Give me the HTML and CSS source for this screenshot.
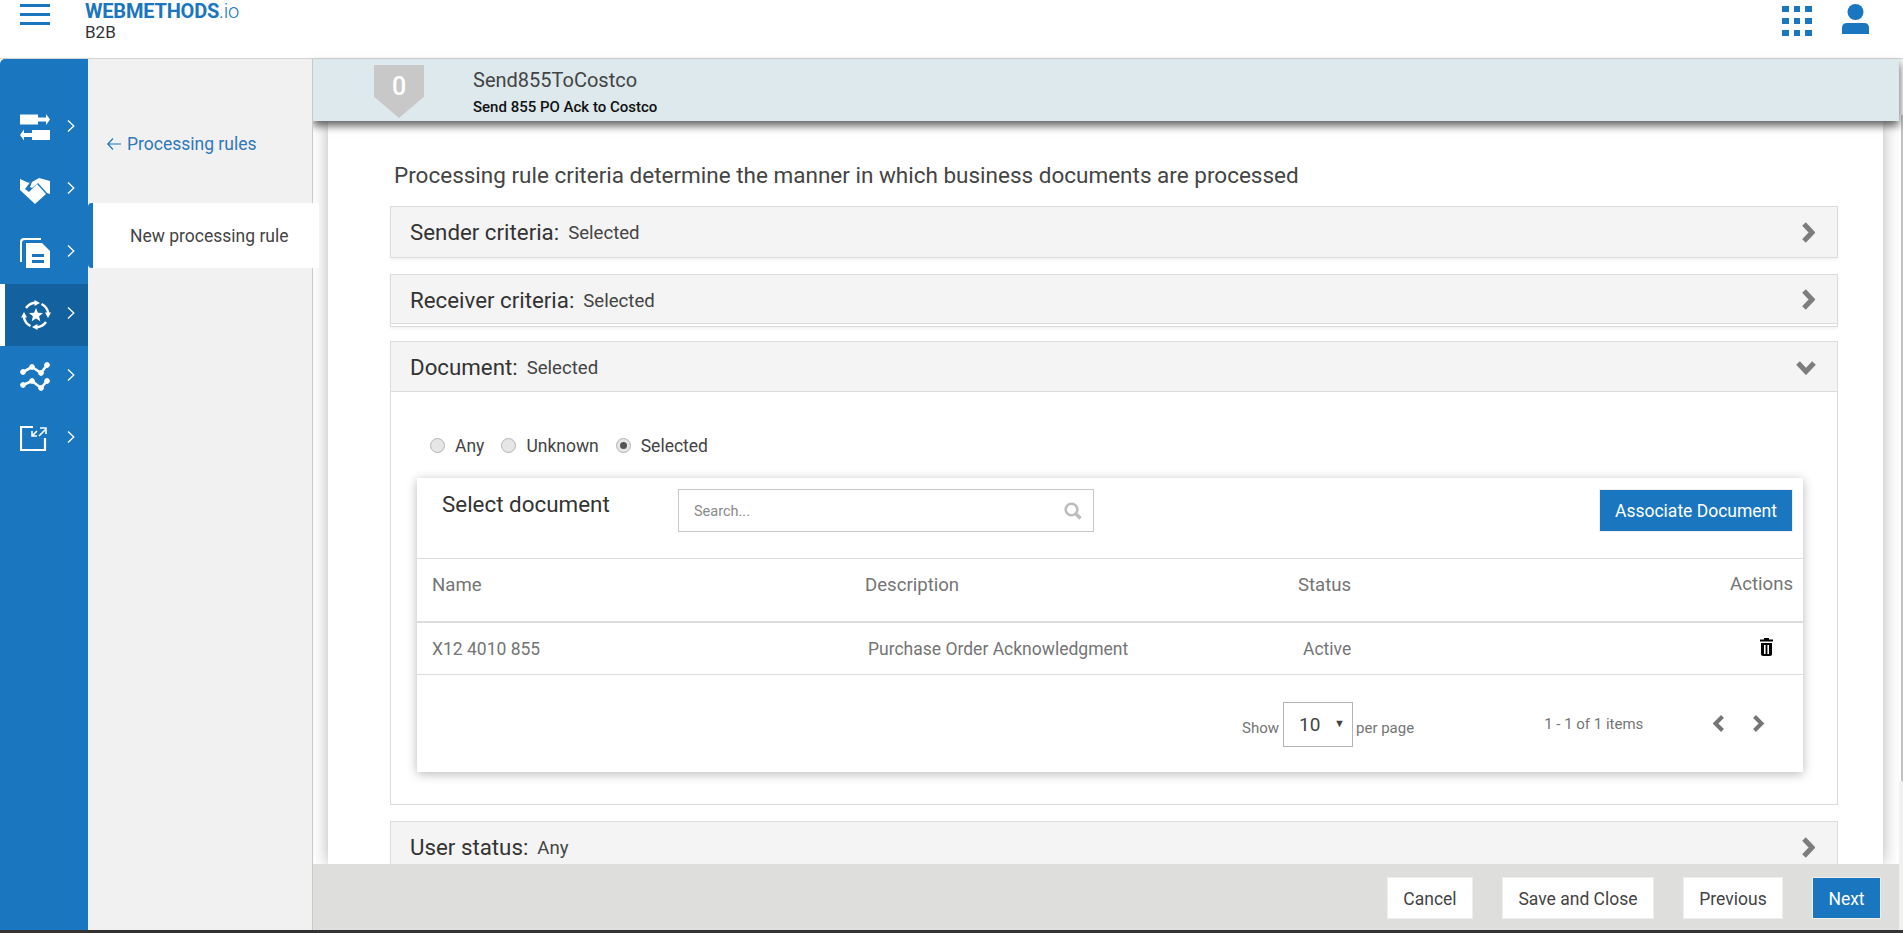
FILE: index.html
```html
<!DOCTYPE html>
<html lang="en">
<head>
  <meta charset="UTF-8" />
  <title>webMethods.io B2B</title>
  <link rel="stylesheet" href="styles.css">
</head>
<body>

<header class="topbar">
  <div class="hamburger"><span></span><span></span><span></span></div>
  <div class="brand">
    <div class="brand-name">WEBMETHODS<span class="brand-io">.io</span></div>
    <div class="brand-sub">B2B</div>
  </div>
  <div class="top-icons">
    <svg class="icon-apps" width="30" height="30" viewBox="0 0 30 30" fill="#1976bf">
      <rect x="0" y="0" width="7" height="6"/><rect x="12" y="0" width="6" height="6"/><rect x="23" y="0" width="7" height="6"/>
      <rect x="0" y="12" width="7" height="6"/><rect x="12" y="12" width="6" height="6"/><rect x="23" y="12" width="7" height="6"/>
      <rect x="0" y="24" width="7" height="6"/><rect x="12" y="24" width="6" height="6"/><rect x="23" y="24" width="7" height="6"/>
    </svg>
    <svg class="icon-user" width="27" height="30" viewBox="0 0 27 30" fill="#1976bf">
      <circle cx="13.5" cy="8" r="8"/>
      <path d="M0 30V24Q0 19 5 19H22Q27 19 27 24V30Z"/>
    </svg>
  </div>
</header>

<div class="app">
  <nav class="sidebar">
    <div class="side-item item-first">
      <svg width="30" height="27" viewBox="0 0 30 27" fill="#fff">
        <path d="M0 .5H18V3.5H26V0L30 5.5L26 11V7.5H18V10.5H0Z"/>
        <path d="M30 16H12V19H4V15.5L0 21L4 26.5V23H12V26H30Z"/>
      </svg>
      <svg class="chev" width="8" height="12" viewBox="0 0 8 12"><path d="M1 .5L6.8 6L1 11.5" fill="none" stroke="#fff" stroke-width="1.3"/></svg>
    </div>
    <div class="side-item">
      <svg width="30" height="27" viewBox="0 0 30 27" fill="#fff">
        <path d="M0 2L9 6L11 4L5 12L9 15L17 7L26 17L15 27L0 13Z"/>
        <path d="M12 5L19 1L30 4V17L27 16L18 6L12 11L10 10Z"/>
      </svg>
      <svg class="chev" width="8" height="12" viewBox="0 0 8 12"><path d="M1 .5L6.8 6L1 11.5" fill="none" stroke="#fff" stroke-width="1.3"/></svg>
    </div>
    <div class="side-item">
      <svg width="30" height="30" viewBox="0 0 30 30" fill="#fff">
        <path d="M0 24V4Q0 0 4 0H21V2H5Q2 2 2 5V24Z"/>
        <path fill-rule="evenodd" d="M6 5H22L30 13V30H6ZM12 16V19H24V16ZM12 22V25H24V22Z"/>
      </svg>
      <svg class="chev" width="8" height="12" viewBox="0 0 8 12"><path d="M1 .5L6.8 6L1 11.5" fill="none" stroke="#fff" stroke-width="1.3"/></svg>
    </div>
    <div class="side-item active">
      <svg width="30" height="30" viewBox="0 0 30 30" fill="none" stroke="#fff" stroke-width="2.4">
        <path d="M5 8A12.5 12.5 0 0 1 14 2.8"/>
        <path d="M20.5 4A12.5 12.5 0 0 1 27.2 13"/>
        <path d="M25 22A12.5 12.5 0 0 1 16 27.2"/>
        <path d="M9.5 26A12.5 12.5 0 0 1 2.8 17"/>
        <path fill="#fff" stroke="none" d="M13.5 0L19 3L13.5 6ZM24 12.5H30L27 18ZM16.5 24V30L11 27ZM0 17.5H6L3 12Z"/>
        <path fill="#fff" stroke="none" d="M15 8L16.9 12.7L22 13.1L18.1 16.3L19.3 21.3L15 18.6L10.7 21.3L11.9 16.3L8 13.1L13.1 12.7Z"/>
      </svg>
      <svg class="chev" width="8" height="12" viewBox="0 0 8 12"><path d="M1 .5L6.8 6L1 11.5" fill="none" stroke="#fff" stroke-width="1.3"/></svg>
    </div>
    <div class="side-item">
      <svg width="30" height="30" viewBox="0 0 30 30" fill="#fff" stroke="#fff">
        <path d="M3 10L12 5L21 11L27 3" fill="none" stroke-width="2.6"/>
        <path d="M3 23L12 19L21 26L27 19" fill="none" stroke-width="2.6"/>
        <circle cx="3" cy="10" r="2.4"/><circle cx="12" cy="5" r="2.4"/><circle cx="21" cy="11" r="2.4"/><circle cx="27" cy="3" r="2.4"/>
        <circle cx="3" cy="23" r="2.4"/><circle cx="12" cy="19" r="2.4"/><circle cx="21" cy="26" r="2.4"/><circle cx="27" cy="19" r="2.4"/>
      </svg>
      <svg class="chev" width="8" height="12" viewBox="0 0 8 12"><path d="M1 .5L6.8 6L1 11.5" fill="none" stroke="#fff" stroke-width="1.3"/></svg>
    </div>
    <div class="side-item item-last">
      <svg width="28" height="25" viewBox="0 0 28 25" fill="none" stroke="#fff" stroke-width="2.2">
        <path d="M13 1H1V24H25V12"/>
        <path d="M12 10L17 5M12 5V10H17" stroke-width="1.6"/>
        <path d="M19 10L26 3M20 2H26V8" stroke-width="1.6"/>
      </svg>
      <svg class="chev" width="8" height="12" viewBox="0 0 8 12"><path d="M1 .5L6.8 6L1 11.5" fill="none" stroke="#fff" stroke-width="1.3"/></svg>
    </div>
  </nav>

  <aside class="subnav">
    <a class="back-link">
      <svg width="14" height="12" viewBox="0 0 14 12" fill="none" stroke="#1976bf" stroke-width="1.2"><path d="M6 .5L.8 6L6 11.5M.8 6H14"/></svg>
      Processing rules
    </a>
    <div class="subnav-tab">New processing rule</div>
  </aside>

  <main class="workspace">
    <div class="banner">
      <div class="badge"><span>0</span></div>
      <div class="banner-text">
        <div class="banner-title">Send855ToCostco</div>
        <div class="banner-sub">Send 855 PO Ack to Costco</div>
      </div>
    </div>

    <div class="content">
      <div class="panel">
        <p class="intro">Processing rule criteria determine the manner in which business documents are processed</p>

        <section class="acc acc-sender">
          <div class="acc-head">
            <span class="acc-title">Sender criteria:</span><span class="acc-value">Selected</span>
            <svg class="acc-chev" width="14" height="21" viewBox="0 0 14 21"><path d="M3 2L11 10.5L3 19" fill="none" stroke="#7d7d7d" stroke-width="5"/></svg>
          </div>
        </section>

        <section class="acc acc-receiver">
          <div class="acc-head">
            <span class="acc-title">Receiver criteria:</span><span class="acc-value">Selected</span>
            <svg class="acc-chev" width="14" height="21" viewBox="0 0 14 21"><path d="M3 2L11 10.5L3 19" fill="none" stroke="#7d7d7d" stroke-width="5"/></svg>
          </div>
        </section>

        <section class="acc acc-document">
          <div class="acc-head">
            <span class="acc-title">Document:</span><span class="acc-value">Selected</span>
            <svg class="acc-chev" width="20" height="15" viewBox="0 0 20 15"><path d="M2 3L10 11.5L18 3" fill="none" stroke="#7d7d7d" stroke-width="5"/></svg>
          </div>
          <div class="acc-body">
            <div class="radios">
              <label class="radio"><i class="dot"></i>Any</label>
              <label class="radio"><i class="dot"></i>Unknown</label>
              <label class="radio"><i class="dot checked"></i>Selected</label>
            </div>

            <div class="card">
              <div class="card-head">
                <h3 class="card-title">Select document</h3>
                <div class="search">
                  <span class="search-text">Search...</span>
                  <svg width="18" height="18" viewBox="0 0 18 18" fill="none" stroke="#bdbdbd"><circle cx="7.5" cy="7.5" r="5.8" stroke-width="2.6"/><path d="M11.5 11.5L16.5 16.5" stroke-width="3.4"/></svg>
                </div>
                <button class="btn btn-primary btn-assoc">Associate Document</button>
              </div>

              <div class="row row-head">
                <div class="cell c-name">Name</div>
                <div class="cell c-desc">Description</div>
                <div class="cell c-status">Status</div>
                <div class="cell c-actions">Actions</div>
              </div>
              <div class="row row-data">
                <div class="cell c-name">X12 4010 855</div>
                <div class="cell c-desc">Purchase Order Acknowledgment</div>
                <div class="cell c-status">Active</div>
                <div class="cell c-actions">
                  <svg width="13" height="18" viewBox="0 0 13 18" fill="#000"><path d="M4 0H9V1.5H13V3.5H0V1.5H4Z"/><path fill-rule="evenodd" d="M1 5H12V16Q12 18 10 18H3Q1 18 1 16ZM4 7V16H5.6V7ZM7.4 7V16H9V7Z"/></svg>
                </div>
              </div>

              <div class="pager">
                <span class="pager-label">Show</span>
                <div class="page-size"><span>10</span><i class="caret">▼</i></div>
                <span class="pager-label">per page</span>
                <span class="pager-count">1 - 1 of 1 items</span>
                <svg class="pager-prev" width="13" height="17" viewBox="0 0 13 17"><path d="M10.5 1.5L3.5 8.5L10.5 15.5" fill="none" stroke="#757575" stroke-width="4"/></svg>
                <svg class="pager-next" width="13" height="17" viewBox="0 0 13 17"><path d="M2.5 1.5L9.5 8.5L2.5 15.5" fill="none" stroke="#757575" stroke-width="4"/></svg>
              </div>
            </div>
          </div>
        </section>

        <section class="acc acc-user">
          <div class="acc-head">
            <span class="acc-title">User status:</span><span class="acc-value">Any</span>
            <svg class="acc-chev" width="14" height="21" viewBox="0 0 14 21"><path d="M3 2L11 10.5L3 19" fill="none" stroke="#7d7d7d" stroke-width="5"/></svg>
          </div>
        </section>
      </div>
    </div>

    <footer class="actions">
      <button class="btn btn-cancel">Cancel</button>
      <button class="btn btn-save">Save and Close</button>
      <button class="btn btn-prev">Previous</button>
      <button class="btn btn-primary btn-next">Next</button>
    </footer>
  </main>

  <div class="scrollstrip"><div class="scrollthumb"></div></div>
</div>

<div class="bottom-line"></div>

</body>
</html>
```

FILE: styles.css
```css
* {
  box-sizing: border-box;
}
html, body {
  margin: 0;
  height: 933px;
  overflow: hidden;
}
body {
  font-family: Roboto, "Liberation Sans", sans-serif;
  background: #fff;
  color: #444;
}

/* top bar */
.topbar {
  height: 59px;
  display: flex;
  border-bottom: 1px solid #d4d4d4;
  position: relative;
}
.hamburger {
  width: 30px;
  margin: 4px 0 0 20px;
  display: flex;
  flex-direction: column;
  gap: 6px;
}
.hamburger span {
  display: block;
  height: 3px;
  background: #1976bf;
}
.brand {
  margin: 0 0 0 35px;
}
.brand-name {
  font-size: 20px;
  font-weight: 700;
  line-height: 22px;
  letter-spacing: -0.2px;
  color: #1976bf;
}
.brand-io {
  font-weight: 300;
}
.brand-sub {
  font-size: 17px;
  line-height: 21px;
  color: #333;
}
.top-icons {
  margin-left: auto;
  padding: 4px 34px 0 0;
  display: flex;
  gap: 30px;
  align-items: flex-start;
}
.icon-apps {
  margin-top: 2px;
}

/* layout */
.app {
  height: 871px;
  display: flex;
}
.sidebar {
  width: 88px;
  flex: none;
  background: #1976bf;
  border-top-left-radius: 5px;
  padding-top: 38px;
  position: relative;
  z-index: 2;
}
.side-item {
  height: 62.3px;
  padding-left: 20px;
  display: flex;
  align-items: center;
  position: relative;
}
.side-item .chev {
  position: absolute;
  left: 67px;
  top: 23px;
}
.item-first > svg:first-child {
  margin-top: -2px;
}
.item-last > svg:first-child {
  margin-top: -2px;
}
.side-item.active {
  background: #14619f;
  border-left: 5px solid #fff;
  padding-left: 16px;
}
.side-item.active .chev {
  left: 62px;
}
.subnav {
  width: 225px;
  flex: none;
  background: #f1f1f1;
  border-right: 1px solid #c9c9c9;
  position: relative;
  z-index: 2;
}
.back-link {
  display: flex;
  align-items: center;
  gap: 6px;
  margin: 0 0 0 19px;
  height: 144px;
  padding-top: 25px;
  font-size: 17.5px;
  color: #2f78b9;
}
.subnav-tab {
  height: 65px;
  width: 231px;
  padding-left: 37px;
  display: flex;
  align-items: center;
  background: #fff;
  font-size: 17.5px;
  color: #444;
  border-left: 5px solid #1976bf;
  border-radius: 4px 0 0 4px;
}

/* main column */
.workspace {
  flex: 1;
  min-width: 0;
  display: flex;
  flex-direction: column;
}
.banner {
  height: 62px;
  flex: none;
  background: #dde9ed;
  display: flex;
  padding-left: 61px;
  box-shadow: 0 5px 8px rgba(0, 0, 0, 0.6);
  position: relative;
  z-index: 1;
}
.badge {
  width: 50px;
  height: 53px;
  margin-top: 6px;
  background: #c8c8c8;
  clip-path: polygon(0 0, 100% 0, 100% 60%, 50% 100%, 0 60%);
  color: #fff;
  font-size: 25px;
  font-weight: 500;
  text-align: center;
  line-height: 44px;
}
.banner-text {
  margin-left: 49px;
}
.banner-title {
  margin-top: 8px;
  font-size: 20px;
  line-height: 26px;
  color: #444;
}
.banner-sub {
  margin-top: 6px;
  font-size: 15px;
  line-height: 17px;
  font-weight: 500;
  color: #111;
}
.content {
  flex: 1;
  min-height: 0;
  overflow: hidden;
  padding: 0 16px 0 15px;
}
.panel {
  background: #fff;
  height: 100%;
  padding: 1px 45px 0 62px;
  box-shadow: 0 0 16px rgba(0, 0, 0, 0.3);
}
.intro {
  margin: 39px 0 0 4px;
  font-size: 22.5px;
  line-height: 28px;
  color: #444;
}

/* accordions */
.acc {
  border: 1px solid #dcdcdc;
  background: #fff;
}
.acc-sender {
  margin-top: 17px;
  height: 52px;
  border-bottom-width: 2px;
  box-shadow: 0 2px 3px rgba(0, 0, 0, 0.05);
}
.acc-receiver {
  margin-top: 16px;
  height: 53px;
  box-shadow: 0 2px 3px rgba(0, 0, 0, 0.05);
}
.acc-document {
  margin-top: 14px;
  height: 464px;
}
.acc-user {
  margin-top: 16px;
  height: 52px;
}
.acc-head {
  height: 50px;
  padding: 0 22px 0 19px;
  display: flex;
  align-items: center;
  background: #f4f4f4;
}
.acc-receiver .acc-head {
  height: 49px;
  padding-top: 1px;
  border-bottom: 1px solid #dcdcdc;
}
.acc-document .acc-head {
  height: 50px;
  padding-top: 1px;
  border-bottom: 1px solid #dcdcdc;
}
.acc-title {
  font-size: 22.3px;
  color: #333;
}
.acc-value {
  margin: 2px 0 0 9px;
  font-size: 18.6px;
  color: #444;
}
.acc-chev {
  margin-left: auto;
}
.acc-document .acc-chev {
  margin-right: -1px;
}

.acc-body {
  padding: 0 34px 0 26px;
}
.radios {
  height: 86px;
  display: flex;
  align-items: center;
  padding: 21px 0 0 13px;
  gap: 17px;
}
.radio {
  display: flex;
  align-items: center;
  gap: 10px;
  font-size: 17.5px;
  color: #444;
}
.dot {
  width: 15px;
  height: 15px;
  border-radius: 50%;
  border: 1px solid #b4b4b4;
  background: #e6e6e6;
  position: relative;
}
.dot.checked::after {
  content: "";
  position: absolute;
  left: 3px;
  top: 3px;
  width: 7px;
  height: 7px;
  border-radius: 50%;
  background: #555;
}

/* document card */
.card {
  height: 294px;
  background: #fff;
  box-shadow: 0 2px 10px rgba(0, 0, 0, 0.28);
}
.card-head {
  height: 81px;
  display: flex;
  align-items: flex-start;
  padding: 11px 10px 0 25px;
  border-bottom: 1px solid #dcdcdc;
}
.card-title {
  margin: 0;
  width: 236px;
  flex: none;
  font-size: 22.4px;
  font-weight: 400;
  line-height: 30px;
  color: #333;
}
.search {
  width: 416px;
  height: 43px;
  border: 1px solid #c8c8c8;
  display: flex;
  align-items: center;
  justify-content: space-between;
  padding: 1px 11px 0 15px;
}
.search-text {
  font-size: 14.5px;
  color: #8a8a8a;
}
.btn {
  height: 42px;
  border: 1px solid #eee;
  background: #fff;
  padding: 2px 0 0;
  font-family: inherit;
  font-size: 17.5px;
  color: #444;
}
.btn-primary {
  background: #1976bf;
  color: #fff;
}
.btn-assoc {
  margin-left: auto;
  width: 194px;
  height: 43px;
  padding-top: 0;
}
.row {
  display: flex;
  align-items: center;
  font-size: 17.5px;
  color: #757575;
}
.row-head {
  height: 64px;
  padding-bottom: 11px;
  font-size: 18.6px;
  border-bottom: 2px solid #dcdcdc;
}
.row-data {
  height: 52px;
  padding-top: 1px;
  border-bottom: 1px solid #dcdcdc;
}
.cell {
  flex: none;
}
.c-name {
  width: 448px;
  padding-left: 15px;
}
.c-desc {
  width: 433px;
}
.c-status {
  width: 332px;
}
.c-actions {
  flex: 1;
  text-align: right;
  padding-right: 10px;
}
.row-head .c-actions {
  margin-top: -2px;
}
.row-data .c-desc {
  padding-left: 3px;
}
.row-data .c-status {
  padding-left: 5px;
}
.row-data .c-actions {
  padding-right: 30px;
  margin-top: -1px;
}
.pager {
  height: 95px;
  display: flex;
  align-items: center;
  padding: 4px 0 0 825px;
  font-size: 15px;
  color: #757575;
}
.pager-label {
  margin-top: 6px;
}
.page-size {
  width: 70px;
  height: 45px;
  margin: 0 3px 0 4px;
  border: 1px solid #b4b4b4;
  display: flex;
  align-items: center;
  padding-left: 15px;
  font-size: 19px;
  color: #444;
  position: relative;
}
.caret {
  position: absolute;
  left: 50px;
  top: 14px;
  font-size: 11px;
  font-style: normal;
  color: #444;
}
.pager-count {
  margin-left: 130px;
  margin-top: -2px;
}
.pager-prev {
  margin: -2px 0 0 69px;
}
.pager-next {
  margin: -2px 0 0 27px;
}

/* footer */
.actions {
  height: 66px;
  flex: none;
  background: #dededc;
  display: flex;
  align-items: center;
  justify-content: flex-end;
  padding: 2px 18px 0 0;
  position: relative;
  z-index: 1;
}
.btn-cancel {
  width: 86px;
}
.btn-save {
  width: 152px;
  margin-left: 29px;
}
.btn-prev {
  width: 100px;
  margin-left: 29px;
}
.btn-next {
  width: 69px;
  margin-left: 29px;
}

/* scrollbar strip and bottom edge */
.scrollstrip {
  width: 4px;
  flex: none;
  background: #f1f1f1;
  padding-top: 56px;
}
.scrollthumb {
  height: 666px;
  background: #c1c1c1;
  border-left: 2px solid #fff;
}
.bottom-line {
  height: 3px;
  background: #333;
}
```
